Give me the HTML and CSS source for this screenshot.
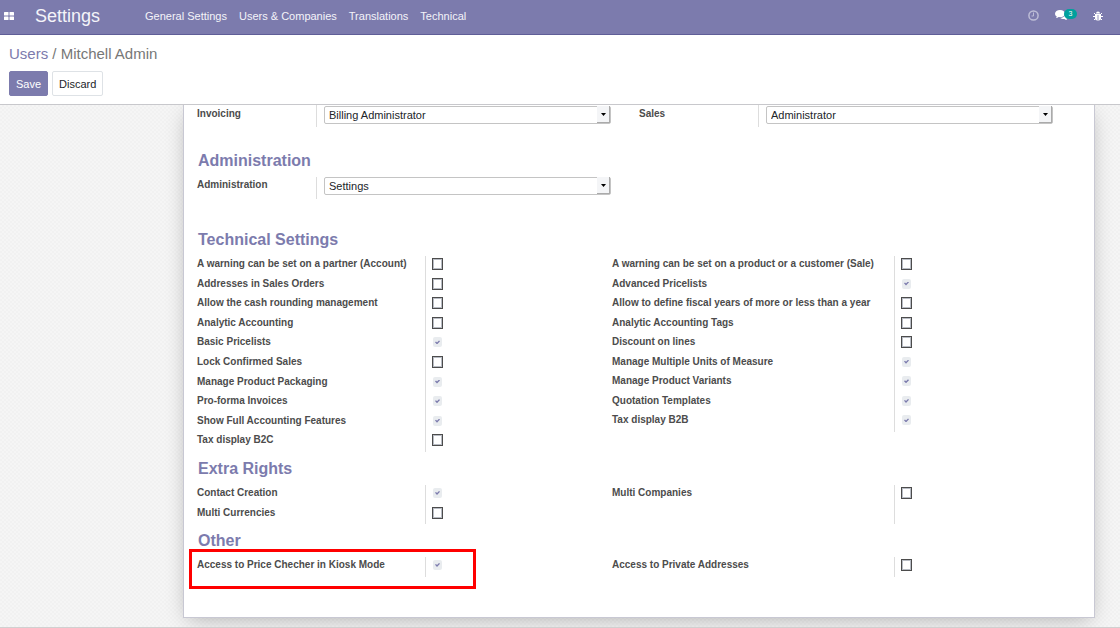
FILE: index.html
```html
<!DOCTYPE html>
<html lang="en">
<head>
<meta charset="utf-8">
<meta name="viewport" content="width=device-width, initial-scale=1">
<title>Settings - Mitchell Admin</title>
<link rel="stylesheet" href="styles.css">
</head>
<body>
<header class="navbar">
  <button class="icon-btn apps" type="button" aria-label="Applications">
    <svg width="10" height="8" viewBox="0 0 10 8"><g fill="#fff"><rect width="4.5" height="3.5" rx=".5"/><rect x="5.5" width="4.5" height="3.5" rx=".5"/><rect y="4.5" width="4.5" height="3.5" rx=".5"/><rect x="5.5" y="4.5" width="4.5" height="3.5" rx=".5"/></g></svg>
  </button>
  <a class="brand" href="#">Settings</a>
  <nav class="menu">
    <a href="#">General Settings</a>
    <a href="#">Users &amp; Companies</a>
    <a href="#">Translations</a>
    <a href="#">Technical</a>
  </nav>
  <div class="systray">
    <button class="icon-btn" type="button" aria-label="Activities">
      <svg width="11" height="11" viewBox="0 0 11 11" fill="none" stroke="#bdbdd6"><circle cx="5.5" cy="5.5" r="4.6" stroke-width="1.5"/><path d="M5.500 2.500v3.500H3.500"/></svg>
    </button>
    <button class="icon-btn chat" type="button" aria-label="Conversations">
      <svg width="13" height="11" viewBox="0 0 13 11" fill="#fff"><path d="M5 0C2.2 0 0 1.600 0 3.700c0 1.200.7 2.200 1.800 2.900-.1.600-.5 1.100-.9 1.500 1.100-.1 2-.5 2.700-1 .4.100.9.100 1.400.1 2.800 0 5-1.500 5-3.500S7.800 0 5 0z"/><path d="M10.700 3.300c0 2.500-2.300 4.400-5.300 4.600.9.800 2.400 1.200 3.900 1 .8.600 1.800.9 2.900 1-.4-.4-.8-.8-.9-1.400.9-.5 1.500-1.300 1.500-2.200 0-1.200-.8-2.300-2.100-3z"/></svg>
      <span class="badge">3</span>
    </button>
    <button class="icon-btn" type="button" aria-label="Developer tools">
      <svg width="10" height="10" viewBox="0 0 10 10"><path d="M3 2.500a2 2 0 0 1 4 0z" fill="#fff"/><path d="M2 3h6v4a2.500 2.500 0 0 1-2.500 2.500h-1A2.500 2.500 0 0 1 2 7z" fill="#fff"/><path d="M2.500 3.500 1 2M7.500 3.500 9 2M0 5.500h10M2.500 7.500 1 9M7.500 7.500 9 9" stroke="#fff" fill="none"/><path d="M5 4v5" stroke="#7c7bad" stroke-width=".8"/></svg>
    </button>
  </div>
</header>

<section class="control-panel">
  <div class="breadcrumb"><a href="#">Users</a> <span>/ Mitchell Admin</span></div>
  <div class="actions">
    <button class="btn primary" type="button">Save</button>
    <button class="btn" type="button">Discard</button>
  </div>
</section>

<main class="content">
  <form class="sheet">
    <section class="fields first">
      <div class="field"><label for="invoicing">Invoicing</label><div class="value"><div class="select"><select id="invoicing"><option>Billing Administrator</option></select></div></div></div>
      <div class="field"><label for="sales">Sales</label><div class="value"><div class="select"><select id="sales"><option>Administrator</option></select></div></div></div>
    </section>

    <h2>Administration</h2>
    <section class="fields">
      <div class="field"><label for="admin">Administration</label><div class="value"><div class="select"><select id="admin"><option>Settings</option></select></div></div></div>
    </section>

    <h2>Technical Settings</h2>
    <section class="checks technical">
      <div class="column">
        <div class="check"><label for="t1">A warning can be set on a partner (Account)</label><span class="box"><input type="checkbox" id="t1"></span></div>
        <div class="check"><label for="t2">Addresses in Sales Orders</label><span class="box"><input type="checkbox" id="t2"></span></div>
        <div class="check"><label for="t3">Allow the cash rounding management</label><span class="box"><input type="checkbox" id="t3"></span></div>
        <div class="check"><label for="t4">Analytic Accounting</label><span class="box"><input type="checkbox" id="t4"></span></div>
        <div class="check"><label for="t5">Basic Pricelists</label><span class="box"><input type="checkbox" id="t5" checked></span></div>
        <div class="check"><label for="t6">Lock Confirmed Sales</label><span class="box"><input type="checkbox" id="t6"></span></div>
        <div class="check"><label for="t7">Manage Product Packaging</label><span class="box"><input type="checkbox" id="t7" checked></span></div>
        <div class="check"><label for="t8">Pro-forma Invoices</label><span class="box"><input type="checkbox" id="t8" checked></span></div>
        <div class="check"><label for="t9">Show Full Accounting Features</label><span class="box"><input type="checkbox" id="t9" checked></span></div>
        <div class="check"><label for="t10">Tax display B2C</label><span class="box"><input type="checkbox" id="t10"></span></div>
      </div>
      <div class="column wide">
        <div class="check"><label for="u1">A warning can be set on a product or a customer (Sale)</label><span class="box"><input type="checkbox" id="u1"></span></div>
        <div class="check"><label for="u2">Advanced Pricelists</label><span class="box"><input type="checkbox" id="u2" checked></span></div>
        <div class="check"><label for="u3">Allow to define fiscal years of more or less than a year</label><span class="box"><input type="checkbox" id="u3"></span></div>
        <div class="check"><label for="u4">Analytic Accounting Tags</label><span class="box"><input type="checkbox" id="u4"></span></div>
        <div class="check"><label for="u5">Discount on lines</label><span class="box"><input type="checkbox" id="u5"></span></div>
        <div class="check"><label for="u6">Manage Multiple Units of Measure</label><span class="box"><input type="checkbox" id="u6" checked></span></div>
        <div class="check"><label for="u7">Manage Product Variants</label><span class="box"><input type="checkbox" id="u7" checked></span></div>
        <div class="check"><label for="u8">Quotation Templates</label><span class="box"><input type="checkbox" id="u8" checked></span></div>
        <div class="check"><label for="u9">Tax display B2B</label><span class="box"><input type="checkbox" id="u9" checked></span></div>
      </div>
    </section>

    <h2>Extra Rights</h2>
    <section class="checks extra">
      <div class="column">
        <div class="check"><label for="e1">Contact Creation</label><span class="box"><input type="checkbox" id="e1" checked></span></div>
        <div class="check"><label for="e2">Multi Currencies</label><span class="box"><input type="checkbox" id="e2"></span></div>
      </div>
      <div class="column wide">
        <div class="check"><label for="e3">Multi Companies</label><span class="box"><input type="checkbox" id="e3"></span></div>
        <div class="check"><span></span><span class="box"></span></div>
      </div>
    </section>

    <h2>Other</h2>
    <section class="checks other">
      <div class="column">
        <div class="check"><label for="o1">Access to Price Checher in Kiosk Mode</label><span class="box"><input type="checkbox" id="o1" checked></span></div>
        <div class="highlight"></div>
      </div>
      <div class="column wide">
        <div class="check"><label for="o2">Access to Private Addresses</label><span class="box"><input type="checkbox" id="o2"></span></div>
      </div>
    </section>
  </form>
</main>
</body>
</html>
```
FILE: styles.css
```css
* { box-sizing: border-box; }

body {
  margin: 0;
  min-height: 100vh;
  display: flex;
  flex-direction: column;
  font: 11px/16px "Liberation Sans", Arial, sans-serif;
  color: #4c4c4c;
  background: #fff;
}

a { color: inherit; text-decoration: none; }
button { font: inherit; cursor: pointer; }

/* Top bar */
.navbar {
  display: flex;
  align-items: center;
  height: 35px;
  padding: 0 17px 3px 4px;
  background: #7c7bad;
  border-bottom: 1px solid #5f5e97;
  color: #f4f4f9;
}
.icon-btn {
  display: flex;
  position: relative;
  padding: 0;
  border: 0;
  background: none;
}
.brand { margin-left: 21px; font-size: 18px; line-height: 24px; }
.menu { display: flex; gap: 12px; margin-left: 45px; }
.systray { display: flex; align-items: center; gap: 16px; margin-left: auto; }
.chat { width: 22px; }
.badge {
  position: absolute;
  left: 9px;
  top: -1px;
  width: 13px;
  height: 10px;
  border-radius: 5px;
  background: #00a09d;
  color: #fff;
  font-size: 7px;
  line-height: 10px;
  text-align: center;
}

/* Breadcrumb and actions */
.control-panel {
  padding: 9px 9px 8px;
  border-bottom: 1px solid #c8c8cc;
}
.breadcrumb { font-size: 15px; line-height: 20px; color: #777; }
.breadcrumb a { color: #7c7bad; }
.actions { display: flex; gap: 4px; margin-top: 7px; }
.btn {
  height: 25px;
  padding: 0 6px;
  border: 1px solid #dee2e6;
  border-radius: 2px;
  background: #fff;
  color: #212529;
}
.btn.primary { background: #7c7bad; border-color: #7c7bad; color: #fff; }

/* Form sheet */
.content {
  flex: 1;
  overflow: hidden;
  padding: 0 25px 9px 183px;
  border-bottom: 1px solid #d0d0d0;
  background: repeating-conic-gradient(#f1f1f1 0 25%, #f5f5f5 0 50%) 0 0 / 4px 4px;
}
.sheet {
  padding: 0 41px 40px 13px;
  border: 1px solid #c8c8d3;
  border-top: 0;
  background: #fff;
  box-shadow: 0 5px 20px -5px rgba(0, 0, 0, 0.3);
}
label { font-size: 10px; font-weight: bold; white-space: nowrap; }
h2 {
  margin: 0 0 6px 1px;
  font-size: 16px;
  line-height: 20px;
  color: #7c7bad;
}

.fields {
  display: grid;
  grid-template-columns: 1fr 1fr;
  column-gap: 28px;
  margin-bottom: 31px;
}
.fields.first { margin-bottom: 24px; }
.field { display: grid; grid-template-columns: 119px 1fr; }
.value {
  height: 22px;
  padding-left: 7px;
  border-left: 1px solid #ddd;
}
.select { position: relative; }
.select select {
  display: block;
  appearance: none;
  width: 100%;
  height: 18px;
  padding: 0 18px 0 4px;
  border: 1px solid #c4c4c4;
  border-radius: 2px;
  background: #fff;
  color: #212529;
  font: inherit;
}
.first .select, .first label { padding-top: 1px; }
.select::before {
  content: "";
  position: absolute;
  right: 1px;
  bottom: 1px;
  width: 12px;
  height: 16px;
  border-right: 1px solid #aaa;
  border-bottom: 1px solid #aaa;
  background: #f4f5f7;
  pointer-events: none;
}
.select::after {
  content: "";
  position: absolute;
  right: 5px;
  bottom: 8px;
  width: 5px;
  height: 3px;
  background: #000;
  clip-path: polygon(0 0, 100% 0, 50% 100%);
  pointer-events: none;
}

/* Check box groups */
.checks {
  display: grid;
  grid-template-columns: 1fr 1fr;
  column-gap: 2px;
}
.checks .column {
  position: relative;
  display: grid;
  grid-auto-rows: 1fr;
  align-self: start;
}
.checks .column:last-child { margin-left: -14px; }
.technical { margin-bottom: 7px; }
.technical .column { min-height: 196px; }
.technical .wide { min-height: 176px; }
.extra { margin-bottom: 7px; }
.extra .column { min-height: 39px; }
.other .column { min-height: 20px; }
.check { display: grid; grid-template-columns: 228px 1fr; }
.wide .check { grid-template-columns: 282px 1fr; }
.box {
  display: flex;
  align-items: start;
  padding: 2px 0 0 6px;
  border-left: 1px solid #ddd;
}
.box input {
  appearance: none;
  width: 11px;
  height: 12px;
  margin: 0;
  border: 1px solid #4c4c4c;
  background: #fff;
  box-shadow: inset 0 0 0 1px #b8bcc4;
}
.box input:checked {
  width: 9px;
  height: 10px;
  margin: 1px;
  border: 0;
  border-radius: 2px;
  background: #e9ecef;
  box-shadow: none;
}
.box input:checked::before {
  content: "";
  display: block;
  width: 5px;
  height: 4px;
  margin: 3px 2px;
  background: #7c7bad;
  clip-path: polygon(0 45%, 20% 25%, 40% 50%, 80% 0, 100% 20%, 40% 100%);
}
.highlight {
  position: absolute;
  left: -8px;
  top: -8px;
  width: 287px;
  height: 40px;
  border: 3px solid #f00;
  pointer-events: none;
}
```
